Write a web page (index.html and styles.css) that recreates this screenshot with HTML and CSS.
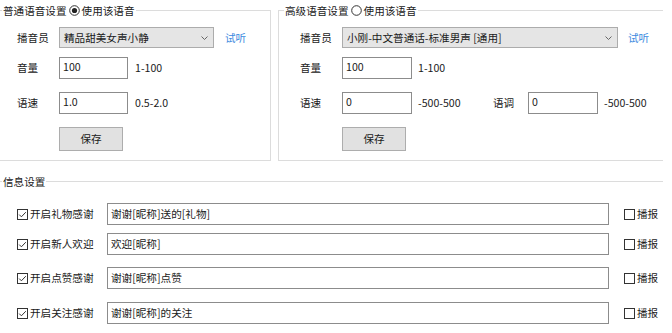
FILE: index.html
```html
<!DOCTYPE html>
<html lang="zh-CN">
<head>
<meta charset="utf-8">
<title>语音设置</title>
<link rel="stylesheet" href="styles.css">
</head>
<body>
<div class="top">
  <fieldset class="group g-left">
    <legend><span>普通语音设置</span><svg class="radio" width="11" height="11" viewBox="0 0 11 11"><circle cx="5.5" cy="5.5" r="4.8" fill="#fff" stroke="#333" stroke-width="1"/><circle cx="5.5" cy="5.5" r="2.6" fill="#222"/></svg><span>使用该语音</span></legend>
    <div class="gbody">
      <div class="row r1"><span class="lbl">播音员</span><div class="select sel-l"><span>精品甜美女声小静</span><svg class="chev" width="7" height="4" viewBox="0 0 7 4"><polyline points="0.5,0.5 3.5,3.5 6.5,0.5" fill="none" stroke="#666" stroke-width="1"/></svg></div><span class="link lk-l">试听</span></div>
      <div class="row r2"><span class="lbl">音量</span><div class="input in-l">100</div><span class="hint hl">1-100</span></div>
      <div class="row r3"><span class="lbl">语速</span><div class="input in-l">1.0</div><span class="hint hl">0.5-2.0</span></div>
      <div class="row r4"><span class="lbl"></span><div class="btn">保存</div></div>
    </div>
  </fieldset>
  <fieldset class="group g-right">
    <legend><span>高级语音设置</span><svg class="radio" width="11" height="11" viewBox="0 0 11 11"><circle cx="5.5" cy="5.5" r="4.8" fill="#fff" stroke="#333" stroke-width="1"/></svg><span>使用该语音</span></legend>
    <div class="gbody">
      <div class="row r1"><span class="lbl">播音员</span><div class="select sel-r"><span>小刚-中文普通话-标准男声 [通用]</span><svg class="chev" width="7" height="4" viewBox="0 0 7 4"><polyline points="0.5,0.5 3.5,3.5 6.5,0.5" fill="none" stroke="#666" stroke-width="1"/></svg></div><span class="link lk-r">试听</span></div>
      <div class="row r2"><span class="lbl">音量</span><div class="input in-r">100</div><span class="hint hr">1-100</span></div>
      <div class="row r3"><span class="lbl">语速</span><div class="input in-r">0</div><span class="hint hr range">-500-500</span><span class="lbl2">语调</span><div class="input in-r">0</div><span class="hint hr2">-500-500</span></div>
      <div class="row r4"><span class="lbl"></span><div class="btn">保存</div></div>
    </div>
  </fieldset>
</div>
<fieldset class="info">
  <legend><span>信息设置</span></legend>
  <div class="ibody">
    <div class="msg m1"><label class="chk"><svg class="box" width="11" height="11" viewBox="0 0 11 11"><rect x="0.5" y="0.5" width="10" height="10" fill="#fff" stroke="#333"/><polyline points="2.2,5.6 4.4,7.8 8.8,3.2" fill="none" stroke="#333" stroke-width="1"/></svg><span>开启礼物感谢</span></label><div class="input msg-in">谢谢[昵称]送的[礼物]</div><label class="rep"><svg class="box" width="11" height="11" viewBox="0 0 11 11"><rect x="0.5" y="0.5" width="10" height="10" fill="#fff" stroke="#333"/></svg><span>播报</span></label></div>
    <div class="msg m2"><label class="chk"><svg class="box" width="11" height="11" viewBox="0 0 11 11"><rect x="0.5" y="0.5" width="10" height="10" fill="#fff" stroke="#333"/><polyline points="2.2,5.6 4.4,7.8 8.8,3.2" fill="none" stroke="#333" stroke-width="1"/></svg><span>开启新人欢迎</span></label><div class="input msg-in">欢迎[昵称]</div><label class="rep"><svg class="box" width="11" height="11" viewBox="0 0 11 11"><rect x="0.5" y="0.5" width="10" height="10" fill="#fff" stroke="#333"/></svg><span>播报</span></label></div>
    <div class="msg m3"><label class="chk"><svg class="box" width="11" height="11" viewBox="0 0 11 11"><rect x="0.5" y="0.5" width="10" height="10" fill="#fff" stroke="#333"/><polyline points="2.2,5.6 4.4,7.8 8.8,3.2" fill="none" stroke="#333" stroke-width="1"/></svg><span>开启点赞感谢</span></label><div class="input msg-in">谢谢[昵称]点赞</div><label class="rep"><svg class="box" width="11" height="11" viewBox="0 0 11 11"><rect x="0.5" y="0.5" width="10" height="10" fill="#fff" stroke="#333"/></svg><span>播报</span></label></div>
    <div class="msg m4"><label class="chk"><svg class="box" width="11" height="11" viewBox="0 0 11 11"><rect x="0.5" y="0.5" width="10" height="10" fill="#fff" stroke="#333"/><polyline points="2.2,5.6 4.4,7.8 8.8,3.2" fill="none" stroke="#333" stroke-width="1"/></svg><span>开启关注感谢</span></label><div class="input msg-in">谢谢[昵称]的关注</div><label class="rep"><svg class="box" width="11" height="11" viewBox="0 0 11 11"><rect x="0.5" y="0.5" width="10" height="10" fill="#fff" stroke="#333"/></svg><span>播报</span></label></div>
  </div>
</fieldset>
</body>
</html>
```
FILE: styles.css
```css
* { box-sizing: border-box; }
html, body { background: #fff; }
body {
  margin: 0;
  padding-top: 2px;
  width: 672px;
  height: 333px;
  overflow: hidden;
  font-family: "Noto Sans CJK SC", "Noto Sans", sans-serif;
  font-size: 10.6px;
  line-height: 16px;
  color: #1a1a1a;
}
.top {
  display: flex;
  gap: 7px;
  margin-left: -5px;
}
fieldset { min-width: 0; margin: 0; }
.group {
  border: 1px solid #dcdcdc;
  padding: 9px 0 9px 0;
}
.g-left { width: 276px; border-left: none; }
.g-right { width: 385px; border-right: none; }
.gbody { padding-left: 21px; }
.g-left .gbody { padding-left: 22px; }
legend {
  padding: 0 1px;
  line-height: 16px;
  height: 16px;
  white-space: nowrap;
}
.g-left legend { margin-left: 7px; }
.g-right legend { margin-left: 5px; }
legend span, legend svg { vertical-align: middle; }
.radio { margin: 0 2px 0 2px; position: relative; top: -1px; }

.row { display: flex; align-items: center; }
.r1 { height: 21px; }
.r2 { height: 22px; margin-top: 9px; }
.r3 { height: 22px; margin-top: 13px; }
.r4 { height: 24px; margin-top: 13px; }
.lbl { width: 42px; flex: none; }
.lbl2 { width: 35px; flex: none; }

.select {
  height: 21px;
  background: #e5e5e5;
  border: 1px solid #acacac;
  display: flex;
  align-items: center;
  justify-content: space-between;
  padding: 0 5px 0 4px;
  flex: none;
}
.sel-l { width: 155px; }
.sel-r { width: 276px; }
.chev { flex: none; }
.link { color: #3b8ae0; }
.lk-l { margin-left: 11px; }
.lk-r { margin-left: 10px; }

.input {
  height: 22px;
  background: #fff;
  border: 1px solid #8c8c8c;
  padding: 1px 0 0 3px;
  flex: none;
  align-self: flex-start;
}
.in-l { width: 69px; }
.in-r { width: 70px; }
.hint { flex: none; }
.hl { margin-left: 7px; }
.hr { margin-left: 6px; }
.range { width: 75px; }
.hr2 { margin-left: 6px; }

.btn {
  width: 64px;
  height: 24px;
  background: #e1e1e1;
  border: 1px solid #adadad;
  display: flex;
  align-items: center;
  justify-content: center;
}

.info {
  margin: 12px 0 0 -5px;
  width: 668px;
  border: 0;
  border-top: 1px solid #dcdcdc;
  padding: 14px 0 0 0;
}
.info legend { margin-left: 7px; }
.ibody { padding-left: 22px; }
.msg { display: flex; align-items: center; height: 22px; }
.m2 { margin-top: 8px; }
.m3 { margin-top: 12px; }
.m4 { margin-top: 13px; }
.chk { width: 90px; flex: none; display: flex; align-items: center; }
.box { flex: none; margin-right: 2px; }
.msg-in { width: 502px; padding-top: 2px; }
.rep { margin-left: 15px; display: flex; align-items: center; }
```
